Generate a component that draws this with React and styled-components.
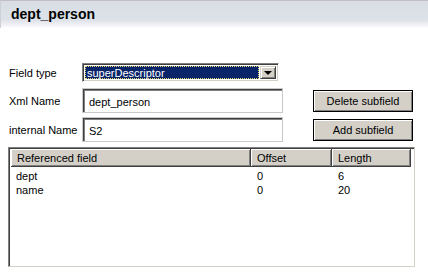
import React from 'react';
import styled, { createGlobalStyle } from 'styled-components';

const GlobalStyle = createGlobalStyle`
  html, body {
    margin: 0;
    padding: 0;
    background: #ffffff;
  }
  body {
    font-family: "Liberation Sans", Arial, sans-serif;
    font-size: 11px;
    color: #000;
  }
`;

const Page = styled.div`
  width: 428px;
  height: 276px;
  overflow: hidden;
  background: #fff;
`;

const Header = styled.div`
  height: 27px;
  border-top: 1px solid #c3bfc9;
  border-left: 1px solid #cfd0d6;
  background: linear-gradient(#d9dde5 0%, #dde1e8 70%, #f4f5f7 92%, #ffffff 100%);
  display: flex;
  align-items: center;
  padding-left: 10px;
`;

const Title = styled.span`
  font-size: 14px;
  font-weight: bold;
  color: #000;
  margin-top: -2px;
`;

const Form = styled.div`
  padding: 35px 0 0 9px;
  display: flex;
  flex-direction: column;
`;

const Row = styled.div`
  display: flex;
  align-items: center;
  height: ${p => p.$h}px;
  margin-bottom: ${p => p.$gap || 0}px;
`;

const Label = styled.div`
  width: 73px;
  flex: none;
`;

const SelectBox = styled.div`
  width: 197px;
  height: 19px;
  box-sizing: border-box;
  border: 1px solid;
  border-color: #808080 #ffffff #ffffff #808080;
  box-shadow: inset 1px 1px 0 #404040, inset -1px -1px 0 #d4d0c8;
  padding: 2px;
  display: flex;
  background: #fff;
`;

const SelectValue = styled.div`
  flex: 1;
  background: #0a246a;
  color: #fff;
  border: 1px dotted #e8d870;
  display: flex;
  align-items: center;
  padding-left: 1px;
  margin-right: 1px;
`;

const ArrowButton = styled.div`
  width: 16px;
  flex: none;
  box-sizing: border-box;
  background: #d4d0c8;
  border: 1px solid;
  border-color: #d4d0c8 #404040 #404040 #d4d0c8;
  box-shadow: inset 1px 1px 0 #ffffff, inset -1px -1px 0 #808080;
  display: flex;
  align-items: center;
  justify-content: center;
`;

const Arrow = styled.div`
  width: 0;
  height: 0;
  border-left: 4px solid transparent;
  border-right: 4px solid transparent;
  border-top: 4px solid #000;
  margin-top: 1px;
`;

const TextInput = styled.div`
  width: 201px;
  height: 25px;
  box-sizing: border-box;
  border: 1px solid #c9c9c9;
  box-shadow: inset 1px 1px 0 #404040, inset 2px 2px 0 #808080;
  background: #fff;
  display: flex;
  align-items: center;
  padding-left: 6px;
  padding-top: 2px;
`;

const Button = styled.div`
  width: 100px;
  height: 22px;
  box-sizing: border-box;
  margin-left: 30px;
  border: 1px solid #000;
  background: #d4d0c8;
  box-shadow: inset 1px 1px 0 #ffffff, inset -1px -1px 0 #808080;
  display: flex;
  align-items: center;
  justify-content: center;
`;

const Table = styled.div`
  margin: 5px 0 0 8px;
  width: 407px;
  height: 120px;
  box-sizing: border-box;
  border: 1px solid;
  border-color: #808080 #d4d0c8 #d4d0c8 #808080;
  box-shadow: inset 1px 1px 0 #404040;
  padding: 1px 0 0 2px;
  background: #fff;
`;

const HeadRow = styled.div`
  display: flex;
  height: 18px;
`;

const HeadCell = styled.div`
  width: ${p => p.$w}px;
  flex: none;
  box-sizing: border-box;
  background: #d4d0c8;
  border-right: 1px solid #404040;
  border-bottom: 1px solid #404040;
  box-shadow: inset 1px 1px 0 #ffffff, inset -1px -1px 0 #808080;
  padding-left: 6px;
  display: flex;
  align-items: center;
`;

const DataRow = styled.div`
  display: flex;
  height: 14px;
  align-items: center;
  margin-top: ${p => (p.$first ? 2 : 0)}px;
`;

const DataCell = styled.div`
  width: ${p => p.$w}px;
  flex: none;
  box-sizing: border-box;
  padding-left: ${p => p.$pad}px;
`;

const columns = [
  { title: 'Referenced field', w: 240, pad: 5 },
  { title: 'Offset', w: 81, pad: 6 },
  { title: 'Length', w: 79, pad: 6 },
];

const rows = [
  ['dept', '0', '6'],
  ['name', '0', '20'],
];

export default function App() {
  return (
    <Page>
      <GlobalStyle />
      <Header>
        <Title>dept_person</Title>
      </Header>
      <Form>
        <Row $h={19} $gap={6}>
          <Label>Field type</Label>
          <SelectBox>
            <SelectValue>superDescriptor</SelectValue>
            <ArrowButton><Arrow /></ArrowButton>
          </SelectBox>
        </Row>
        <Row $h={25} $gap={4}>
          <Label>Xml Name</Label>
          <TextInput>dept_person</TextInput>
          <Button>Delete subfield</Button>
        </Row>
        <Row $h={25}>
          <Label>internal Name</Label>
          <TextInput>S2</TextInput>
          <Button>Add subfield</Button>
        </Row>
      </Form>
      <Table>
        <HeadRow>
          {columns.map(c => (
            <HeadCell key={c.title} $w={c.w}>{c.title}</HeadCell>
          ))}
        </HeadRow>
        {rows.map((r, i) => (
          <DataRow key={r[0]} $first={i === 0}>
            {r.map((v, j) => (
              <DataCell key={j} $w={columns[j].w} $pad={columns[j].pad}>{v}</DataCell>
            ))}
          </DataRow>
        ))}
      </Table>
    </Page>
  );
}
